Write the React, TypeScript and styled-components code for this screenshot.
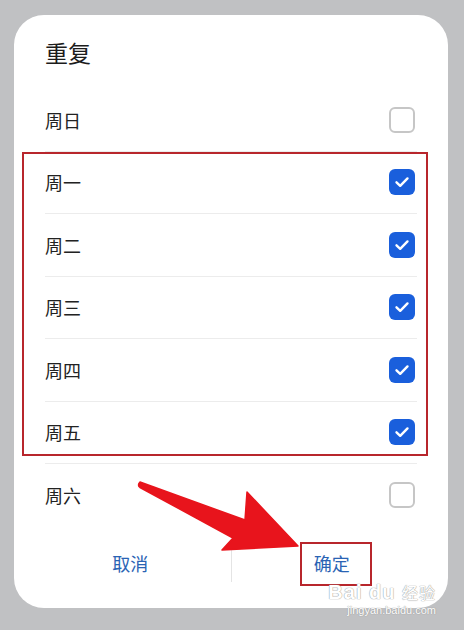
import React, { useState } from 'react';
import styled, { createGlobalStyle } from 'styled-components';

const GlobalStyle = createGlobalStyle`
    html, body {
        margin: 0;
        padding: 0;
        background-color: #c0c1c3;
    }
    body {
        font-family: "Noto Sans CJK SC", "Noto Sans", sans-serif;
    }
`;

const Page = styled.div`
    width: 464px;
    height: 630px;
    padding: 15px 16px 0 14px;
    box-sizing: border-box;
    background-color: #c0c1c3;
    position: relative;
    overflow: hidden;
`;

const Card = styled.div`
    position: relative;
    width: 434px;
    height: 593px;
    background-color: #fff;
    border-radius: 30px;
    display: flex;
    flex-direction: column;
`;

const Header = styled.div`
    height: 74px;
    display: flex;
    align-items: center;
    padding: 0 31px;
    font-size: 23px;
    color: #1c1c1c;
`;

const List = styled.div`
    padding: 0 31px;
    display: flex;
    flex-direction: column;
`;

const Row = styled.div<{ $last?: boolean }>`
    height: 62.5px;
    box-sizing: border-box;
    display: flex;
    align-items: center;
    justify-content: space-between;
    border-bottom: ${p => (p.$last ? 'none' : '1px solid #ececec')};
    font-size: 18px;
    color: #222;
`;

const Box = styled.div<{ $checked: boolean }>`
    width: 26px;
    height: 26px;
    box-sizing: border-box;
    margin-right: 2px;
    border-radius: 6px;
    display: flex;
    align-items: center;
    justify-content: center;
    background-color: ${p => (p.$checked ? '#1a5fdc' : '#fff')};
    border: ${p => (p.$checked ? 'none' : '2px solid #c6c6c6')};
`;

const Footer = styled.div`
    flex: 1;
    display: flex;
    align-items: center;
    padding: 0 16px 8px;
`;

const FooterButton = styled.div`
    flex: 1;
    text-align: center;
    font-size: 18px;
    color: #2a63b4;
`;

const FooterDivider = styled.div`
    width: 1px;
    height: 38px;
    background-color: #e4e4e4;
`;

const Highlight = styled.div<{ $left: number; $top: number; $w: number; $h: number }>`
    position: absolute;
    left: ${p => p.$left}px;
    top: ${p => p.$top}px;
    width: ${p => p.$w}px;
    height: ${p => p.$h}px;
    box-sizing: border-box;
    border: 2px solid #b8262c;
    pointer-events: none;
`;

const Arrow = styled.svg`
    position: absolute;
    left: 116px;
    top: 460px;
    width: 180px;
    height: 85px;
    pointer-events: none;
`;

const Watermark = styled.div`
    position: absolute;
    right: 28px;
    bottom: 14px;
    text-align: right;
    font-family: "Liberation Sans", sans-serif;
    color: #fff;
    text-shadow: 0 0 1px #9a9a9a, 0 0 1px #9a9a9a;
    line-height: 1;
    pointer-events: none;
`;

const MarkTop = styled.div`
    font-size: 20px;
    font-weight: bold;
    letter-spacing: 1px;
    span {
        font-family: "Noto Sans CJK SC", sans-serif;
        font-size: 16px;
        font-weight: normal;
    }
`;

const MarkBottom = styled.div`
    font-size: 11px;
    margin-top: 3px;
`;

const Check = () => (
    <svg width="18" height="18" viewBox="0 0 18 18">
        <path d="M3.5 9.3 L7.2 12.8 L14.5 5.4" fill="none" stroke="#fff" strokeWidth="2.4" strokeLinecap="round" strokeLinejoin="round" />
    </svg>
);

const DAYS = ['周日', '周一', '周二', '周三', '周四', '周五', '周六'];

const App: React.FC = () => {
    const [checked] = useState<boolean[]>([false, true, true, true, true, true, false]);

    return (
        <>
            <GlobalStyle />
            <Page>
                <Card>
                    <Header>重复</Header>
                    <List>
                        {DAYS.map((day, i) => (
                            <Row key={day} $last={i === DAYS.length - 1}>
                                <span>{day}</span>
                                <Box $checked={checked[i]}>{checked[i] && <Check />}</Box>
                            </Row>
                        ))}
                    </List>
                    <Footer>
                        <FooterButton>取消</FooterButton>
                        <FooterDivider />
                        <FooterButton>确定</FooterButton>
                    </Footer>

                    <Highlight $left={8} $top={137} $w={406} $h={304} />
                    <Highlight $left={286} $top={527} $w={72} $h={44} />
                    <Arrow viewBox="130 475 180 85">
                        <path
                            d="M140 482 Q137 485 140 487.5 L233 538 L222 550 L298 546 L247 492 L245 520 Z"
                            fill="#e8141c"
                            stroke="#e8141c"
                            strokeWidth="1.5"
                            strokeLinejoin="round"
                        />
                    </Arrow>
                </Card>
                <Watermark>
                    <MarkTop>Bai du <span>经验</span></MarkTop>
                    <MarkBottom>jingyan.baidu.com</MarkBottom>
                </Watermark>
            </Page>
        </>
    );
};

export default App;
